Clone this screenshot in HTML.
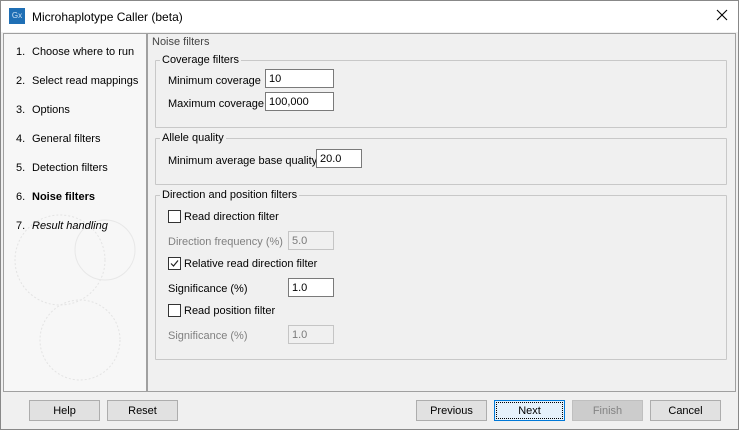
<!DOCTYPE html>
<html><head><style>
body{margin:0;width:739px;height:430px;overflow:hidden;font-family:"Liberation Sans",sans-serif;font-size:11px;color:#000;background:#f0f0f0;position:relative}
.a{position:absolute}
.win{left:0;top:0;width:737px;height:428px;border:1px solid #888;background:#f0f0f0}
.title{left:1px;top:1px;width:737px;height:31px;background:#fff}
.t{white-space:nowrap;margin-top:2px}
.n{display:inline-block;width:16px}
.grp{border:1px solid #c8c8c8;border-radius:1px}
.gt{background:#f0f0f0;padding:0 2px}
.inp{background:#fff;border:1px solid #7a7a7a;height:19px;box-sizing:border-box;padding:3px 3px 0;line-height:13px}
.dis{background:#f0f0f0;border-color:#c5c5c5;color:#7a7a7a}
.cb{width:13px;height:13px;border:1px solid #333;background:#fff;box-sizing:border-box}
.btn{height:21px;box-sizing:border-box;border:1px solid #adadad;background:#e1e1e1;text-align:center;line-height:20px}
.gray{color:#808080}
</style></head><body>
<div class="a win"></div>
<div class="a title"></div>
<div class="a" style="left:9px;top:8px;width:16px;height:16px;background:#1f6fb5;color:#cfe3f5;font-size:8px;line-height:16px;text-align:center">Gx</div>
<div class="a t" style="left:32px;top:8px;font-size:12px">Microhaplotype Caller (beta)</div>
<svg class="a" style="left:716px;top:9px" width="12" height="12"><path d="M1 1L11 11M11 1L1 11" stroke="#000" stroke-width="1.1"/></svg>

<div class="a" style="left:3px;top:33px;width:142px;height:357px;border:1px solid #a0a0a0;background:#f7f7f7"></div>
<svg class="a" style="left:10px;top:200px" width="135" height="190" opacity="0.25"><circle cx="50" cy="60" r="45" fill="none" stroke="#aaa" stroke-dasharray="2 2"/><circle cx="70" cy="140" r="40" fill="none" stroke="#aaa" stroke-dasharray="2 2"/><circle cx="95" cy="50" r="30" fill="none" stroke="#bbb"/></svg>
<div class="a t" style="left:16px;top:44px"><span class="n">1.</span>Choose where to run</div>
<div class="a t" style="left:16px;top:73px"><span class="n">2.</span>Select read mappings</div>
<div class="a t" style="left:16px;top:102px"><span class="n">3.</span>Options</div>
<div class="a t" style="left:16px;top:131px"><span class="n">4.</span>General filters</div>
<div class="a t" style="left:16px;top:160px"><span class="n">5.</span>Detection filters</div>
<div class="a t" style="left:16px;top:189px"><span class="n">6.</span><b>Noise filters</b></div>
<div class="a t" style="left:16px;top:218px"><span class="n">7.</span><i>Result handling</i></div>

<div class="a" style="left:147px;top:33px;width:587px;height:357px;border:1px solid #a0a0a0"></div>
<div class="a t" style="left:152px;top:34px;color:#444">Noise filters</div>

<div class="a grp" style="left:155px;top:60px;width:570px;height:66px"></div>
<div class="a t gt" style="left:160px;top:52px">Coverage filters</div>
<div class="a t" style="left:168px;top:73px">Minimum coverage</div>
<div class="a inp" style="left:265px;top:69px;width:69px">10</div>
<div class="a t" style="left:168px;top:96px">Maximum coverage</div>
<div class="a inp" style="left:265px;top:92px;width:69px">100,000</div>

<div class="a grp" style="left:155px;top:138px;width:570px;height:45px"></div>
<div class="a t gt" style="left:160px;top:130px">Allele quality</div>
<div class="a t" style="left:168px;top:153px">Minimum average base quality</div>
<div class="a inp" style="left:316px;top:149px;width:46px">20.0</div>

<div class="a grp" style="left:155px;top:195px;width:570px;height:163px"></div>
<div class="a t gt" style="left:160px;top:187px">Direction and position filters</div>
<div class="a cb" style="left:168px;top:210px"></div>
<div class="a t" style="left:184px;top:209px">Read direction filter</div>
<div class="a t gray" style="left:168px;top:234px">Direction frequency (%)</div>
<div class="a inp dis" style="left:288px;top:231px;width:46px">5.0</div>
<div class="a cb" style="left:168px;top:257px"></div>
<svg class="a" style="left:168px;top:257px" width="13" height="13"><path d="M3 6.5L5.5 9L10 3.5" stroke="#222" fill="none" stroke-width="1.2"/></svg>
<div class="a t" style="left:184px;top:256px">Relative read direction filter</div>
<div class="a t" style="left:168px;top:281px">Significance (%)</div>
<div class="a inp" style="left:288px;top:278px;width:46px">1.0</div>
<div class="a cb" style="left:168px;top:304px"></div>
<div class="a t" style="left:184px;top:303px">Read position filter</div>
<div class="a t gray" style="left:168px;top:328px">Significance (%)</div>
<div class="a inp dis" style="left:288px;top:325px;width:46px">1.0</div>

<div class="a btn" style="left:29px;top:400px;width:71px">Help</div>
<div class="a btn" style="left:107px;top:400px;width:71px">Reset</div>
<div class="a btn" style="left:416px;top:400px;width:71px">Previous</div>
<div class="a btn" style="left:494px;top:400px;width:71px;border:1px solid #0078d7;background:#e5f1fb"><div style="position:absolute;left:1px;top:1px;right:1px;bottom:1px;border:1px dotted #000"></div>Next</div>
<div class="a btn" style="left:572px;top:400px;width:71px;background:#cccccc;border-color:#bfbfbf;color:#838383">Finish</div>
<div class="a btn" style="left:650px;top:400px;width:71px">Cancel</div>
</body></html>
